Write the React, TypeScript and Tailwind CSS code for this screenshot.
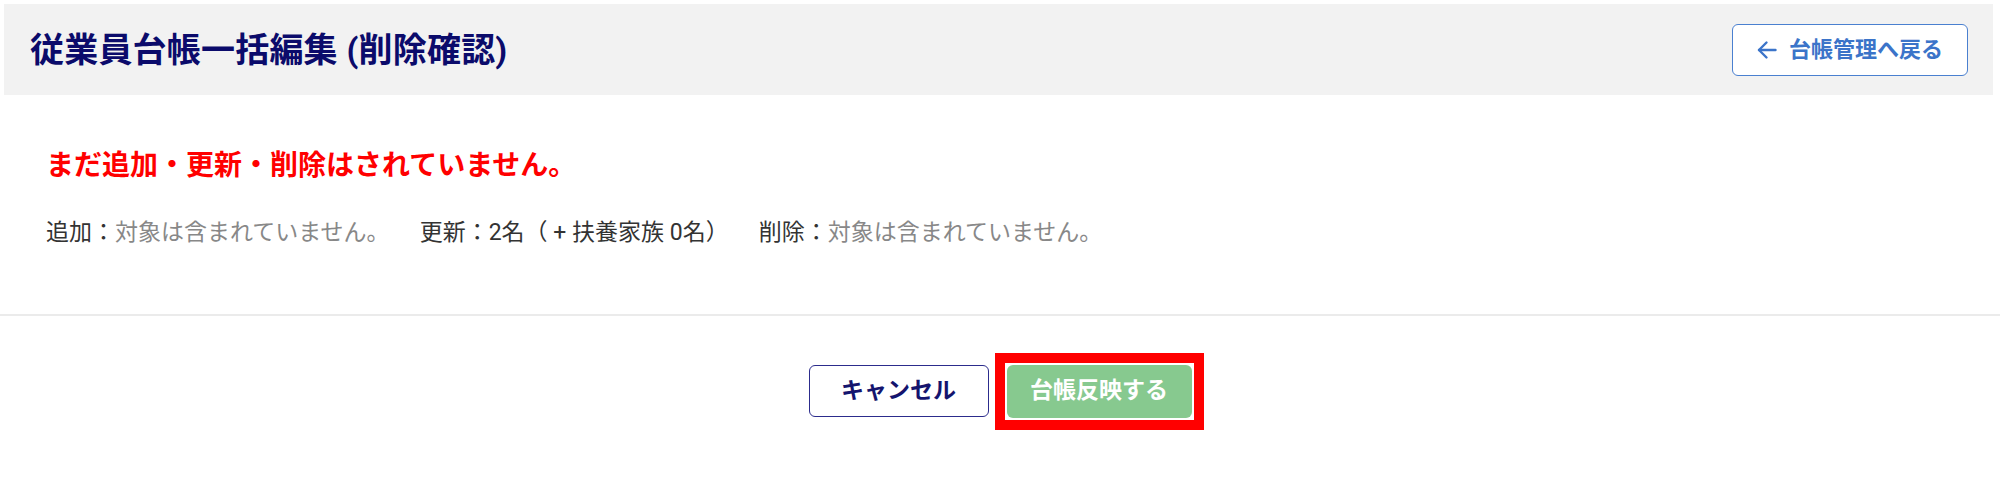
const font = { fontFamily: "Roboto, 'Noto Sans CJK JP', sans-serif" };

const SummaryItem = ({ label, children }: { label: string; children: React.ReactNode }) => (
  <span className="whitespace-nowrap">
    <span className="text-[#333333]">{label}：</span>
    {children}
  </span>
);

const BackArrow = () => (
  <svg width="20" height="20" viewBox="0 0 20 20" fill="none" stroke="currentColor" strokeWidth="2.4" strokeLinecap="round" strokeLinejoin="round">
    <path d="M18.5 10H2" />
    <path d="M9.5 2.5L2 10l7.5 7.5" />
  </svg>
);

export default function App() {
  return (
    <div className="w-[2000px] h-[483px] bg-white" style={font}>
      {/* header */}
      <div className="ml-1 mr-[7px] pt-1">
        <div className="h-[91px] bg-[#f2f2f2] flex items-center justify-between pl-[26px] pr-[25px]">
          <h1 className="text-[34px] font-bold text-[#0b0b6b] leading-none tracking-[0.2px]">
            従業員台帳一括編集 (削除確認)
          </h1>
          <button
            type="button"
            className="w-[236px] h-[52px] bg-white border border-[#4a80d0] rounded-[6px] flex items-center justify-center gap-[12px] text-[#3b74c9] text-[22px] font-bold"
          >
            <BackArrow />
            <span>台帳管理へ戻る</span>
          </button>
        </div>
      </div>

      {/* result */}
      <div className="pl-[46px] pt-[51px]">
        <p className="text-[28px] font-bold text-[#ff0000] leading-[40px]">
          まだ追加・更新・削除はされていません。
        </p>
        <div className="mt-[31px] flex gap-[30px] text-[23px] leading-[32px] text-[#888888]">
          <SummaryItem label="追加">対象は含まれていません。</SummaryItem>
          <SummaryItem label="更新">
            <span className="text-[#333333]">2名（ + 扶養家族 0名）</span>
          </SummaryItem>
          <SummaryItem label="削除">対象は含まれていません。</SummaryItem>
        </div>
      </div>

      <div className="mt-[65px] h-[2px] bg-[#ebebeb]" />

      {/* actions */}
      <div className="mt-[49px] flex justify-center gap-[18px]">
        <button
          type="button"
          className="w-[180px] h-[52px] bg-white border border-[#2c2c8c] rounded-[6px] text-[23px] font-bold text-[#14146e]"
        >
          キャンセル
        </button>
        <div className="relative">
          <button
            type="button"
            className="w-[185px] h-[53px] bg-[#87c98f] rounded-[6px] text-[23px] font-bold text-white"
          >
            台帳反映する
          </button>
          <span className="absolute -inset-[12px] border-[10px] border-[#ff0000] pointer-events-none" />
        </div>
      </div>
    </div>
  );
}
